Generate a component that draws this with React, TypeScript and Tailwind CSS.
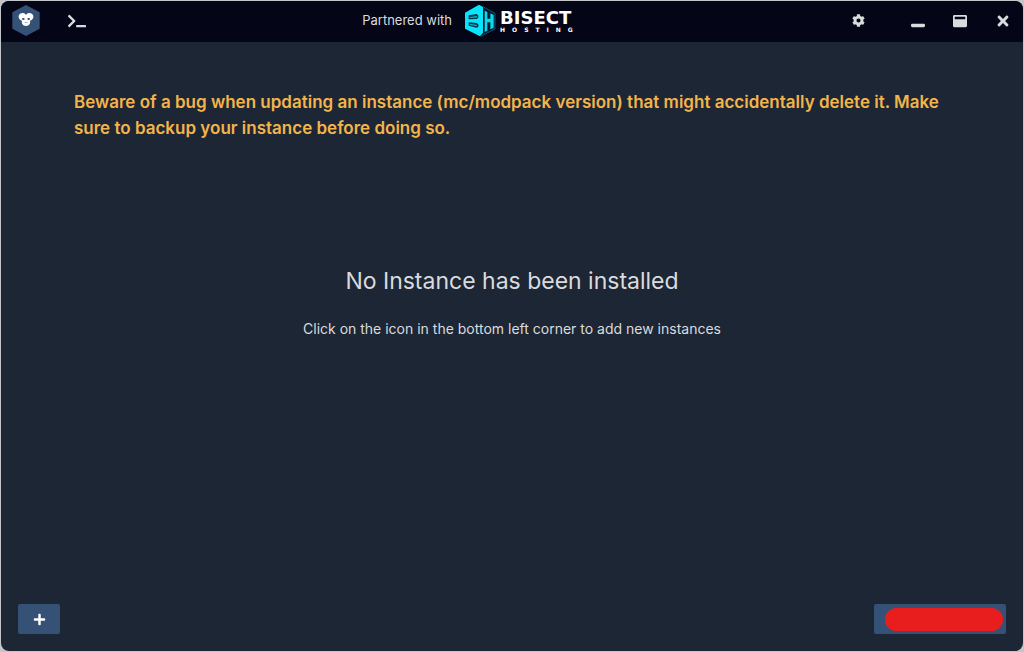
import { FaCog, FaPlus, FaTerminal, FaTimes, FaWindowMaximize, FaWindowMinimize } from "react-icons/fa";

function LauncherLogo() {
  return (
    <svg viewBox="0 0 84 93" className="h-[31px] w-7" aria-hidden="true">
      <path d="M42 0 83 22V71L42 93 1 71V22Z" fill="#365176" />
      <path
        d="M31 24c5-1 9 2 11 6 2-4 6-7 11-6 8 1 12 7 11 13-1 6-5 9-10 10 1 4 1 7-1 10-2 4-6 6-11 6s-9-2-11-6c-2-3-2-6-1-10-5-1-9-4-10-10-1-6 3-12 11-13Z"
        fill="#fff"
      />
      <ellipse cx="34" cy="42" rx="4" ry="3" fill="#365176" />
      <ellipse cx="50" cy="42" rx="4" ry="3" fill="#365176" />
      <path d="M39 51l2 3M46 51l-2 3" stroke="#365176" strokeWidth="2" fill="none" />
    </svg>
  );
}

function HostMark() {
  return (
    <svg viewBox="0 0 96 99" className="h-[33px] w-8" aria-hidden="true">
      <path d="M57 8 93 28V75L50 97" fill="#061a2b" stroke="#087f99" strokeWidth="2" />
      <path d="M3 26 45 2 57 9V86L48 97 3 74Z" fill="#09e4fc" />
      <path d="M14 34l24-4 5 5v6l-5 4-24 1ZM14 55l24 2 5 4v7l-5 3-24-6Z" fill="#063447" />
      <path d="M17 39l21-3 2 2-3 3-20 1ZM17 59l20 3 3 3-3 2-20-5Z" fill="#07aecb" />
      <path d="M62 20 70 24V44H79V28L89 33V71L79 76V55H70V80L62 84Z" fill="#09d9f0" />
    </svg>
  );
}

export default function App() {
  return (
    <div className="flex min-h-screen bg-[#c4c5c7] font-['Inter',sans-serif] text-[#dadbde]">
      <div className="m-px flex flex-1 flex-col overflow-hidden rounded-lg bg-[#1d2634]">
        <header className="grid h-[41px] grid-cols-[1fr_auto_1fr] items-center bg-[#040617] pb-0.5">
          <div className="flex items-center gap-7 pl-[11px]">
            <a href="#home" aria-label="Home">
              <LauncherLogo />
            </a>
            <button type="button" aria-label="Open console">
              <FaTerminal size={18} />
            </button>
          </div>
          <div className="-ml-[82px] flex items-center gap-3">
            <span className="text-[13px]">Partnered with</span>
            <a href="#hosting" className="flex items-center gap-1 text-white">
              <HostMark />
              <span className="flex flex-col pt-0.5 font-['DejaVu_Sans',sans-serif] font-bold">
                <span className="text-[18px] leading-4">BISECT</span>
                <span className="text-[6px] leading-2 tracking-[7px]">HOSTING</span>
              </span>
            </a>
          </div>
          <div className="flex items-center justify-end pr-3">
            <button type="button" aria-label="Settings" className="mr-[46px]">
              <FaCog size={13} />
            </button>
            <div className="flex items-center gap-7">
              <button type="button" aria-label="Minimize">
                <FaWindowMinimize size={14} />
              </button>
              <button type="button" aria-label="Maximize">
                <FaWindowMaximize size={14} />
              </button>
              <button type="button" aria-label="Close">
                <FaTimes size={16} />
              </button>
            </div>
          </div>
        </header>

        <main className="flex flex-1 flex-col">
          <p className="mx-[73px] mt-[47px] text-[17px] leading-[26px] font-semibold text-[#f3b44b]">
            Beware of a bug when updating an instance (mc/modpack version) that might accidentally delete it. Make sure
            to backup your instance before doing so.
          </p>
          <section className="mt-[122px] text-center">
            <h1 className="text-[23px] leading-9">No Instance has been installed</h1>
            <p className="mt-[18px] text-sm leading-6">
              Click on the icon in the bottom left corner to add new instances
            </p>
          </section>
        </main>

        <footer className="flex items-center justify-between px-[17px] pb-[17px]">
          <button
            type="button"
            aria-label="Add instance"
            className="flex h-[30px] w-[42px] items-center justify-center rounded-xs bg-[#365176] text-white"
          >
            <FaPlus size={13} />
          </button>
          <button
            type="button"
            aria-label="Account"
            className="flex h-[30px] w-[132px] items-center justify-end rounded-xs bg-[#365176] pr-[3px]"
          >
            <span className="h-[23px] w-[118px] rounded-full bg-[#e81d1d]" />
          </button>
        </footer>
      </div>
    </div>
  );
}
